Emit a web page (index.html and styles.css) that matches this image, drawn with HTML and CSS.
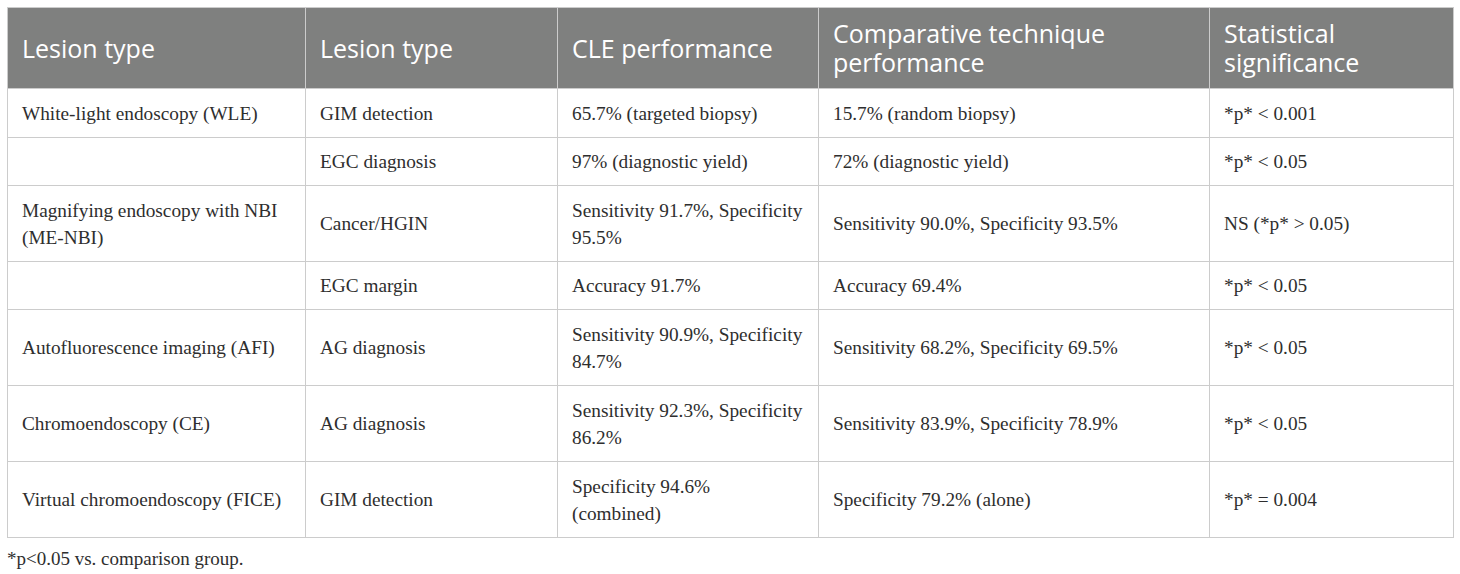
FILE: index.html
```html
<!DOCTYPE html>
<html>
<head>
<meta charset="utf-8">
<link rel="stylesheet" href="styles.css">
</head>
<body>
<div class="wrap">
<table class="data">
<colgroup>
<col class="c1"><col class="c2"><col class="c3"><col class="c4"><col class="c5">
</colgroup>
<thead>
<tr><th>Lesion type</th><th>Lesion type</th><th>CLE performance</th><th>Comparative technique performance</th><th>Statistical significance</th></tr>
</thead>
<tbody>
<tr class="first"><td>White-light endoscopy (WLE)</td><td>GIM detection</td><td>65.7% (targeted biopsy)</td><td>15.7% (random biopsy)</td><td>*p* &lt; 0.001</td></tr>
<tr><td></td><td>EGC diagnosis</td><td>97% (diagnostic yield)</td><td>72% (diagnostic yield)</td><td>*p* &lt; 0.05</td></tr>
<tr class="tall"><td>Magnifying endoscopy with NBI (ME-NBI)</td><td>Cancer/HGIN</td><td>Sensitivity 91.7%, Specificity 95.5%</td><td>Sensitivity 90.0%, Specificity 93.5%</td><td>NS (*p* &gt; 0.05)</td></tr>
<tr><td></td><td>EGC margin</td><td>Accuracy 91.7%</td><td>Accuracy 69.4%</td><td>*p* &lt; 0.05</td></tr>
<tr class="tall"><td>Autofluorescence imaging (AFI)</td><td>AG diagnosis</td><td>Sensitivity 90.9%, Specificity 84.7%</td><td>Sensitivity 68.2%, Specificity 69.5%</td><td>*p* &lt; 0.05</td></tr>
<tr class="tall"><td>Chromoendoscopy (CE)</td><td>AG diagnosis</td><td>Sensitivity 92.3%, Specificity 86.2%</td><td>Sensitivity 83.9%, Specificity 78.9%</td><td>*p* &lt; 0.05</td></tr>
<tr class="tall"><td>Virtual chromoendoscopy (FICE)</td><td>GIM detection</td><td>Specificity 94.6%<br>(combined)</td><td>Specificity 79.2% (alone)</td><td>*p* = 0.004</td></tr>
</tbody>
</table>
<p class="note">*p&lt;0.05 vs. comparison group.</p>
</div>
</body>
</html>
```
FILE: styles.css
```css
html, body {
  margin: 0;
  padding: 0;
  background: #ffffff;
}
.wrap {
  padding: 7px 8px 0 7px;
}
.data {
  width: 1446px;
  border-collapse: collapse;
  table-layout: fixed;
  font-family: "Liberation Serif", "Times New Roman", serif;
  font-size: 19.3px;
  color: #2e2e2e;
}
.c1 { width: 298px; }
.c2 { width: 252px; }
.c3 { width: 261px; }
.c4 { width: 391px; }
.c5 { width: 244px; }
.data th {
  background: #7f807f;
  color: #ffffff;
  font-family: "Open Sans", "Noto Sans", sans-serif;
  font-weight: 400;
  font-size: 25px;
  line-height: 29px;
  text-align: left;
  vertical-align: middle;
  padding: 10px 14px 10px 14px;
  border: 1px solid #cccccc;
  height: 81px;
  box-sizing: border-box;
}
.data td {
  border: 1px solid #cccccc;
  padding: 9px 14px 9px 14px;
  line-height: 27px;
  vertical-align: middle;
  height: 48px;
  box-sizing: border-box;
}
.data tr.first td {
  height: 49px;
}
.data tr.tall td {
  height: 76px;
}
.note {
  margin: 10px 0 0 0;
  font-family: "Liberation Serif", "Times New Roman", serif;
  font-size: 19px;
  line-height: 22px;
  color: #2e2e2e;
}
```
